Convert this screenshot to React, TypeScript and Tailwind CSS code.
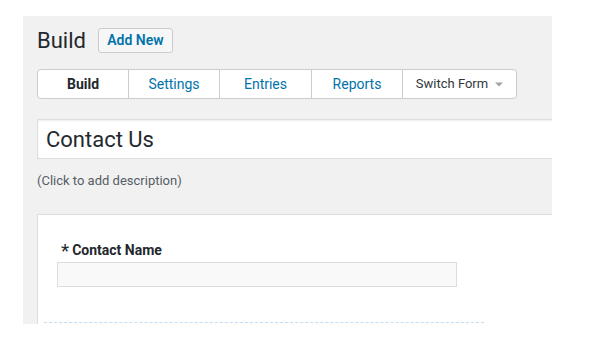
import React from 'react';

const tabs = [
  { label: 'Build', width: 'w-[90px]', active: true },
  { label: 'Settings', width: 'w-[91px] border-l border-[#ccc]' },
  { label: 'Entries', width: 'w-[92px] border-l border-[#ccc]' },
  { label: 'Reports', width: 'w-[91px] border-l border-[#ccc]' },
];

const App: React.FC = () => {
  return (
    <div className="w-[595px] h-[363px] bg-white font-['Roboto',sans-serif] overflow-hidden">
      <div className="ml-[23px] mt-[16px] w-[529px] h-[308px] bg-[#f1f1f1] pl-[14px] flex flex-col overflow-hidden">
        {/* page title */}
        <div className="shrink-0 flex items-center pt-[10px] gap-[12px]">
          <h1 className="text-[22px] leading-[29px] text-[#23282d] font-normal">Build</h1>
          <button className="w-[75px] h-[25px] flex items-center justify-center bg-[#f7f7f7] border border-[#ccc] rounded-[3px] text-[14px] font-semibold text-[#0073aa]">
            Add New
          </button>
        </div>

        {/* tabs */}
        <div className="shrink-0 mt-[14px] flex w-[480px] h-[30px] bg-white border border-[#ccc] rounded-[4px] text-[14px]">
          {tabs.map((t) => (
            <div
              key={t.label}
              className={`${t.width} flex items-center justify-center ${t.active ? 'font-bold text-[#23282d]' : 'text-[#0073aa]'}`}
            >
              {t.label}
            </div>
          ))}
          <div className="w-[114px] border-l border-[#ccc] flex items-center justify-center gap-[7px] text-[13px] text-[#32373c]">
            Switch Form
            <svg width="8" height="5" viewBox="0 0 8 5">
              <path d="M0 0.5 L8 0.5 L4 4.5 Z" fill="#a0a5aa" />
            </svg>
          </div>
        </div>

        {/* form title */}
        <div className="shrink-0 mt-[20px] -mr-[20px] h-[40px] bg-white border border-[#ddd] shadow-[inset_0_1px_2px_rgba(0,0,0,0.07)] pl-[8px] flex items-center text-[22px] text-[#23282d]">
          Contact Us
        </div>
        <p className="shrink-0 mt-[12px] text-[13px] leading-[20px] text-[#555d66]">(Click to add description)</p>

        {/* form fields */}
        <div className="mt-[23px] flex-1 bg-white border-t border-l border-[#ddd]">
          <div className="pt-[25px] pl-[19px]">
            <div className="pl-[4px] flex items-center h-[20px] text-[14px] font-bold text-[#23282d]">
              <span className="mr-[3px] text-[19px] leading-[20px] font-normal translate-y-[1px]">*</span>
              Contact Name
            </div>
            <div className="mt-[2px] w-[400px] h-[25px] bg-[#f9f9f9] border border-[#ddd]" />
          </div>
          <div className="mt-[35px] ml-[6px] w-[440px] border-t border-dashed border-[#c3ddf2]" />
        </div>
      </div>
    </div>
  );
};

export default App;
